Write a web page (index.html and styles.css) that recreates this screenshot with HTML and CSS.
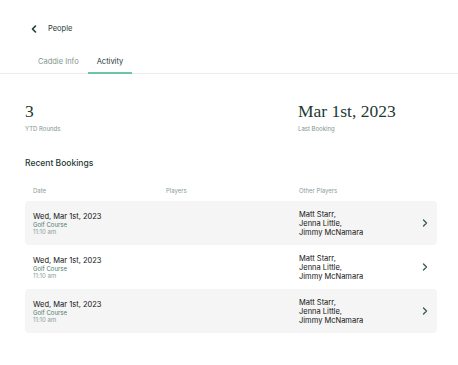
FILE: index.html
```html
<!DOCTYPE html>
<html lang="en">
<head>
    <meta charset="UTF-8">
    <meta name="viewport" content="width=device-width, initial-scale=1.0">
    <title>Caddie Activity</title>
    <link rel="stylesheet" href="styles.css">
</head>
<body>
    <!-- Back link -->
    <div class="back">
        <svg class="back-icon" width="8" height="8" viewBox="0 0 8 8">
            <path d="M5.5 1 L2.5 4 L5.5 7" fill="none" stroke="#1e3a34" stroke-width="1.6" stroke-linecap="round" stroke-linejoin="round"/>
        </svg>
        <span>People</span>
    </div>

    <!-- Tabs -->
    <nav class="tabs">
        <a class="tab">Caddie Info</a>
        <a class="tab active">Activity</a>
    </nav>

    <main class="content">
        <div class="stats">
            <div class="stat">
                <div class="stat-value">3</div>
                <div class="stat-label">YTD Rounds</div>
            </div>
            <div class="stat">
                <div class="stat-value">Mar 1st, 2023</div>
                <div class="stat-label">Last Booking</div>
            </div>
        </div>

        <h2>Recent Bookings</h2>

        <div class="table">
            <div class="row head">
                <span>Date</span>
                <span>Players</span>
                <span>Other Players</span>
                <span></span>
            </div>
            <div class="row booking shaded">
                <div class="date">
                    <div class="day">Wed, Mar 1st, 2023</div>
                    <div class="course">Golf Course</div>
                    <div class="time">11:10 am</div>
                </div>
                <div></div>
                <div class="others">Matt Starr,<br>Jenna Little,<br>Jimmy McNamara</div>
                <svg class="chev" width="8" height="8" viewBox="0 0 8 8"><path d="M2.5 1 L5.5 4 L2.5 7" fill="none" stroke="#3d5c55" stroke-width="1.4" stroke-linecap="round" stroke-linejoin="round"/></svg>
            </div>
            <div class="row booking">
                <div class="date">
                    <div class="day">Wed, Mar 1st, 2023</div>
                    <div class="course">Golf Course</div>
                    <div class="time">11:10 am</div>
                </div>
                <div></div>
                <div class="others">Matt Starr,<br>Jenna Little,<br>Jimmy McNamara</div>
                <svg class="chev" width="8" height="8" viewBox="0 0 8 8"><path d="M2.5 1 L5.5 4 L2.5 7" fill="none" stroke="#3d5c55" stroke-width="1.4" stroke-linecap="round" stroke-linejoin="round"/></svg>
            </div>
            <div class="row booking shaded">
                <div class="date">
                    <div class="day">Wed, Mar 1st, 2023</div>
                    <div class="course">Golf Course</div>
                    <div class="time">11:10 am</div>
                </div>
                <div></div>
                <div class="others">Matt Starr,<br>Jenna Little,<br>Jimmy McNamara</div>
                <svg class="chev" width="8" height="8" viewBox="0 0 8 8"><path d="M2.5 1 L5.5 4 L2.5 7" fill="none" stroke="#3d5c55" stroke-width="1.4" stroke-linecap="round" stroke-linejoin="round"/></svg>
            </div>
        </div>
    </main>
</body>
</html>
```

FILE: styles.css
```css
body {
    margin: 0;
    font-family: 'Inter', 'Liberation Sans', sans-serif;
    color: #1e3a34;
    background: #fff;
}

.back {
    display: flex;
    align-items: center;
    gap: 10px;
    padding: 23px 0 0 30px;
    height: 11px;
    font-size: 7.5px;
    color: #1e3a34;
}

.back-icon {
    display: block;
}

.tabs {
    display: flex;
    margin-top: 22px;
    padding-left: 29px;
    border-bottom: 1px solid #ececec;
}

.tab {
    padding: 0 9px 5px;
    font-size: 7.5px;
    line-height: 11px;
    color: #7f9590;
    border-bottom: 2px solid transparent;
    margin-bottom: -1px;
}

.tab.active {
    color: #1e3a34;
    border-bottom-color: #6cc4a2;
}

.content {
    padding: 0 21px 0 25px;
}

.stats {
    display: grid;
    grid-template-columns: 273px 1fr;
    margin-top: 27px;
}

.stat-value {
    font-family: 'Liberation Serif', serif;
    font-size: 17.5px;
    line-height: 20px;
    color: #1e3a34;
}

.stat-label {
    margin-top: 4px;
    font-size: 6px;
    color: #7f9590;
}

h2 {
    margin: 26px 0 0;
    font-size: 8.5px;
    font-weight: 500;
    color: #1e3a34;
}

.table {
    margin-top: 16px;
}

.row {
    display: grid;
    grid-template-columns: 133px 133px 1fr 8px;
    align-items: center;
    padding: 0 8px;
}

.row.head {
    height: 12px;
    margin-bottom: 5px;
    font-size: 6px;
    color: #8a9c98;
}

.booking {
    height: 44px;
    border-radius: 4px;
}

.booking.shaded {
    background: #f5f5f5;
}

.day {
    font-size: 7.5px;
    line-height: 9px;
    color: #111;
}

.course {
    font-size: 6px;
    line-height: 7px;
    color: #4e7a6c;
}

.time {
    font-size: 6px;
    line-height: 7px;
    color: #8a9c98;
}

.others {
    font-size: 7.5px;
    line-height: 9px;
    color: #111;
}

.chev {
    display: block;
}
```
